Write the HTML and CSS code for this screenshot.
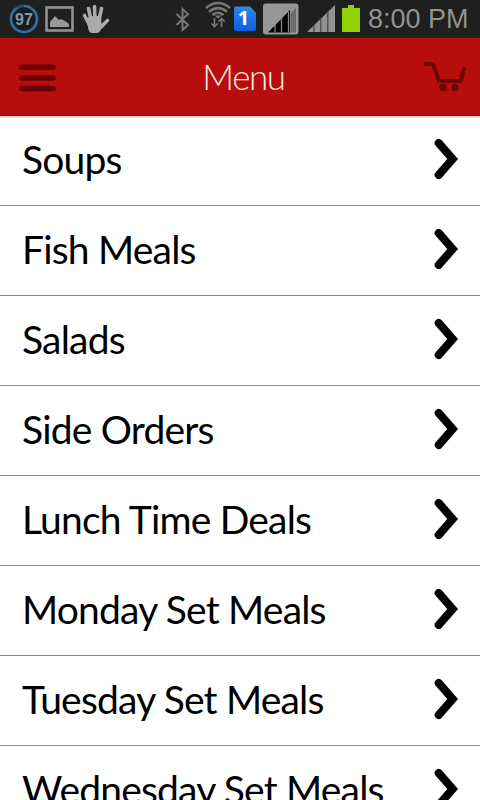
FILE: index.html
```html
<!DOCTYPE html>
<html lang="en">
<head>
<meta charset="utf-8">
<title>Menu</title>
<link rel="stylesheet" href="styles.css">
</head>
<body>
<div class="status">
  <svg class="notices" width="112" height="38" viewBox="0 0 112 38">
    <circle cx="24" cy="19" r="13" fill="#141c24" stroke="#1f5078" stroke-width="3"/>
    <path d="M24 6A13 13 0 1 1 17 8" fill="none" stroke="#33719f" stroke-width="2.2"/>
    <text class="level" x="24" y="24.500" text-anchor="middle">97</text>
    <rect x="46.500" y="7.500" width="26" height="23" fill="none" stroke="#939393" stroke-width="2.600"/>
    <path d="M50 27v-5l5-6 4 4 2-1 4 2 4 3v3z" fill="#999"/>
    <path d="M91 28L88 22 84.500 15.500M91 20L88.500 8.500M95 20L94.500 6.500M99 20L101.500 8.500M100 28L107.500 20.500" fill="none" stroke="#aaa" stroke-width="3.600" stroke-linecap="round"/>
    <path d="M86.500 19l3.500-3h11l.5 8 3-1-4 7q-1 3-3 3h-6q-2 0-3-3z" fill="#aaa"/>
  </svg>
  <svg class="signals" width="190" height="38" viewBox="172 0 190 38">
    <path d="M176.500 14L188 25l-5.500 5V9l5.500 5-11.500 11" fill="none" stroke="#777" stroke-width="2"/>
    <g fill="none" stroke="#777" stroke-width="2.600">
      <path d="M206 8q12-10 24 0M209 11.800q9-7.500 18 0M212.500 15q5.500-4.500 11 0"/>
      <path d="M214.500 18v8.500M221.500 27v-8" stroke-width="1.700"/>
      <path d="M211.500 23.500l3 3 3-3M218.500 21.500l3-3 3 3" stroke-width="1.700"/>
    </g>
    <path d="M214.500 15.500h7L218 18.500z" fill="#777"/>
    <linearGradient id="sim" x2="0" y2="1"><stop stop-color="#3188e4"/><stop offset="1" stop-color="#0f5ce0"/></linearGradient>
    <path d="M235.500 6.500H250l6 6V29q0 2-2 2h-18q-2 0-2-2V8.500q0-2 1.500-2z" fill="url(#sim)"/>
    <text class="sim" x="243.500" y="25" text-anchor="middle">1</text>
    <rect x="263" y="3.500" width="35.500" height="31" rx="3" fill="#969696"/>
    <path d="M290.500 14l5.500-6.500v25h-5.500z" fill="#6b6b6b"/>
    <path d="M268 32.500L290 10v22.500z" fill="#000"/>
    <path d="M275 24v8.500M281.500 18v14.500M288.500 12v20.500" stroke="#888" stroke-width="1.300"/>
    <path d="M307 32L335 5v27z" fill="#929292"/>
    <path d="M313.800 25v7M320.800 18v14M327.800 11v21" stroke="#444" stroke-width="1.200"/>
    <path d="M342 8h6V5h6v3h6v24h-18z" fill="#8fd400"/>
  </svg>
  <time class="clock">8:00 PM</time>
</div>
<header class="bar">
  <svg class="burger" width="38" height="28" viewBox="0 0 38 28"><path d="M4 3.300h31M4 14h31M4 24.500h31" stroke="#6a0000" stroke-width="5.600" stroke-linecap="round"/></svg>
  <h1>Menu</h1>
  <svg class="cart" width="44" height="32" viewBox="0 0 44 32"><path d="M3.500 4h7.500L17 21h21.500L42 9" fill="none" stroke="#700303" stroke-width="4" stroke-linecap="round" stroke-linejoin="round"/><g fill="#700303"><circle cx="21" cy="27.500" r="3.700"/><circle cx="33" cy="27.500" r="3.700"/></g></svg>
</header>
<ul class="menu">
  <li><span>Soups</span><svg viewBox="0 0 26 42"><path d="M4.700 5l14 16L4.700 37"/></svg></li>
  <li><span>Fish Meals</span><svg viewBox="0 0 26 42"><path d="M4.700 5l14 16L4.700 37"/></svg></li>
  <li><span>Salads</span><svg viewBox="0 0 26 42"><path d="M4.700 5l14 16L4.700 37"/></svg></li>
  <li><span>Side Orders</span><svg viewBox="0 0 26 42"><path d="M4.700 5l14 16L4.700 37"/></svg></li>
  <li><span>Lunch Time Deals</span><svg viewBox="0 0 26 42"><path d="M4.700 5l14 16L4.700 37"/></svg></li>
  <li><span>Monday Set Meals</span><svg viewBox="0 0 26 42"><path d="M4.700 5l14 16L4.700 37"/></svg></li>
  <li><span>Tuesday Set Meals</span><svg viewBox="0 0 26 42"><path d="M4.700 5l14 16L4.700 37"/></svg></li>
  <li><span>Wednesday Set Meals</span><svg viewBox="0 0 26 42"><path d="M4.700 5l14 16L4.700 37"/></svg></li>
</ul>
</body>
</html>
```
FILE: styles.css
```css
* { box-sizing: border-box; }
body {
  margin: 0;
  height: 800px;
  overflow: hidden;
  background: #fff;
  font-family: Lato, sans-serif;
}
svg { display: block; flex: none; }
.status {
  display: flex;
  align-items: center;
  height: 38px;
  background: #1f1f1f;
}
.signals { margin-left: 60px; }
.level { font: bold 16px "Liberation Sans", sans-serif; fill: #8b959d; }
.sim { font: bold 20px "Open Sans", sans-serif; fill: #fff; }
.clock {
  margin-left: 6px;
  font: 27px/36px "Liberation Sans", sans-serif;
  color: #939393;
  white-space: nowrap;
}
.bar {
  display: flex;
  align-items: center;
  justify-content: space-between;
  height: 78px;
  padding: 0 14px 0 18px;
  background: #b80d0d;
  border-bottom: 1px solid #5c1a14;
}
.burger { margin-top: 3px; }
.cart { margin-bottom: 2px; }
h1 {
  margin: 0 0 2px 9px;
  font-size: 35px;
  font-weight: 300;
  line-height: 74px;
  letter-spacing: -1.4px;
  color: #ffe9dc;
}
.menu {
  margin: 0;
  padding: 0;
  list-style: none;
  box-shadow: inset 0 2px #e2d6d4;
}
.menu li {
  display: flex;
  align-items: center;
  justify-content: space-between;
  height: 90px;
  padding: 0 20px 3px 22px;
  border-bottom: 1px solid #8e8e8e;
  font-size: 39px;
  letter-spacing: -0.8px;
  white-space: nowrap;
  color: #000;
}
.menu svg {
  width: 26px;
  height: 42px;
  fill: none;
  stroke: #000;
  stroke-width: 8;
  stroke-linecap: round;
  stroke-linejoin: miter;
}
```
